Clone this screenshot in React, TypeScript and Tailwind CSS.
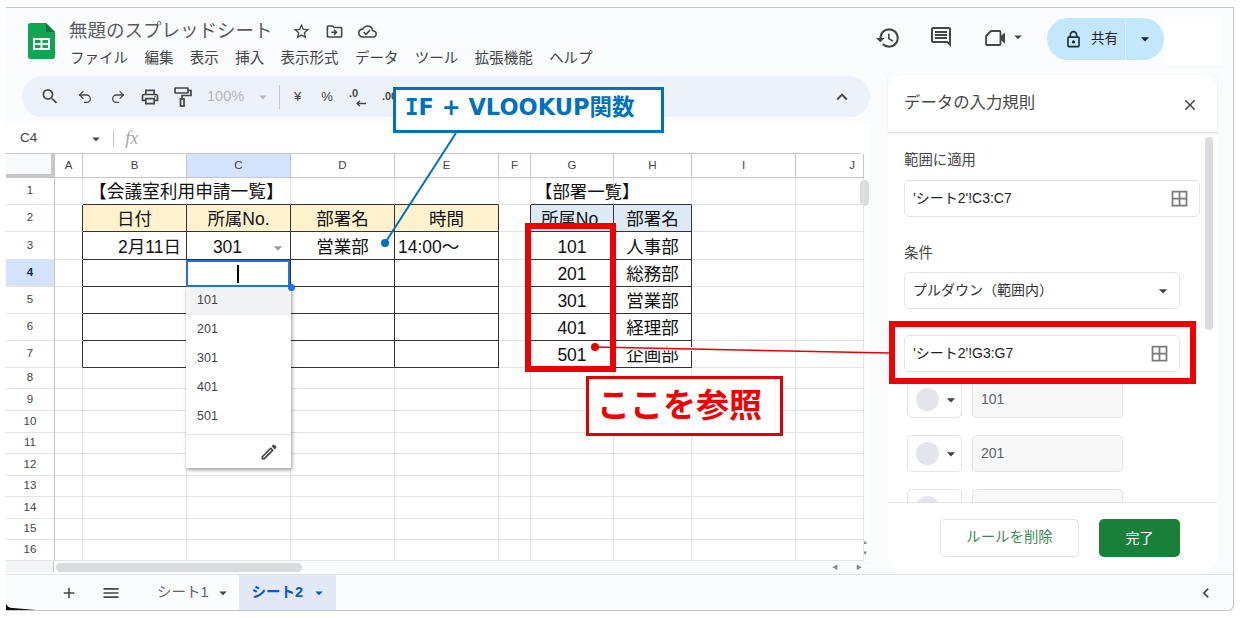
import React from "react";
import clsx from "clsx";
import { Redo2, Undo2 } from "lucide-react";
import {
  MdAdd,
  MdArrowDropDown,
  MdChevronLeft,
  MdClose,
  MdExpandLess,
  MdHistory,
  MdMenu,
  MdMoreVert,
  MdOutlineBorderAll,
  MdOutlineCloudDone,
  MdOutlineComment,
  MdOutlineDriveFileMove,
  MdOutlineEdit,
  MdOutlineLock,
  MdOutlinePrint,
  MdOutlineSearch,
  MdOutlineStarBorder,
} from "react-icons/md";

const cols = ["A", "B", "C", "D", "E", "F", "G", "H", "I", "J"];
const heights = [27, 27, 28, 27, 27, 27, 27, 21, 22, 22, 21, 22, 21, 22, 21, 21];
const menus = ["ファイル", "編集", "表示", "挿入", "表示形式", "データ", "ツール", "拡張機能", "ヘルプ"];

// row -> column -> text
const cells: Record<number, Record<string, string>> = {
  2: { B: "日付", C: "所属No.", D: "部署名", E: "時間", G: "所属No.", H: "部署名" },
  3: { B: "2月11日", C: "301", D: "営業部", E: "14:00～", G: "101", H: "人事部" },
  4: { G: "201", H: "総務部" },
  5: { G: "301", H: "営業部" },
  6: { G: "401", H: "経理部" },
  7: { G: "501", H: "企画部" },
};

const inTable = (col: string, row: number) =>
  row >= 2 && row <= 7 && ["B", "C", "D", "E", "G", "H"].includes(col);

function Cell({ col, row }: { col: string; row: number }) {
  const blackRight = inTable(col, row) || ((col === "A" || col === "F") && row >= 2 && row <= 7);
  const blackBottom = ["B", "C", "D", "E", "G", "H"].includes(col) && row >= 1 && row <= 7;
  const text = cells[row]?.[col];
  const orange = row === 2 && ["B", "C", "D", "E"].includes(col);
  const blue = row === 2 && ["G", "H"].includes(col);

  return (
    <div
      className={clsx(
        "relative flex min-w-0 items-center justify-center border-r border-b text-[17.5px] leading-none whitespace-nowrap text-[#111]",
        blackRight ? "border-r-[#333]" : "border-r-[#e2e3e3]",
        blackBottom ? "border-b-[#333]" : "border-b-[#e2e3e3]",
        text && "pt-[4px]",
        orange && "bg-[#fff2cc]",
        blue && "bg-[#deeaf6]",
        row === 3 && col === "B" && "justify-end pr-[5px]",
        row === 3 && col === "E" && "justify-start pl-[3px]",
        row === 3 && col === "C" && "pr-[22px]",
      )}
    >
      {text}
      {row === 3 && col === "C" && (
        <MdArrowDropDown className="absolute right-[2px] text-[20px] text-[#9a9a9a]" />
      )}
      {row === 1 && col === "B" && (
        <span className="absolute left-[6px] mt-[4px] text-[17.7px]">【会議室利用申請一覧】</span>
      )}
      {row === 1 && col === "G" && (
        <span className="absolute left-[4px] mt-[4px] text-[17.4px]">【部署一覧】</span>
      )}
    </div>
  );
}

function Grid() {
  return (
    <div className="flex h-[408px] bg-white">
      <div className="w-[854px]">
        <div className="grid h-[25px] grid-cols-[49px_28px_104px_104px_104px_104px_32px_83px_78px_104px_68px] border-t border-[#c7c7c7]">
          <div className="border-r-[4px] border-b-[4px] border-[#c7c7c7] bg-[#f8f9fa]" />
          {cols.map((col) => (
            <div
              key={col}
              className={clsx(
                "flex items-center justify-center border-r border-b border-[#c7c7c7] text-[11.5px] text-[#444]",
                col === "C" && "bg-[#d3e3fd]",
                col === "J" && "justify-end pr-[8px]",
              )}
            >
              {col}
            </div>
          ))}
        </div>
        {heights.map((height, i) => (
          <div
            key={i}
            style={{ height }}
            className="grid grid-cols-[49px_28px_104px_104px_104px_104px_32px_83px_78px_104px_68px]"
          >
            <div
              className={clsx(
                "flex items-center justify-center border-r border-b border-r-[#c7c7c7] border-b-[#e2e3e3] text-[11.5px]",
                i + 1 === 4 ? "bg-[#d3e3fd] font-bold text-[#0b2c5a]" : "text-[#444]",
              )}
            >
              {i + 1}
            </div>
            {cols.map((col) => (
              <Cell key={col} col={col} row={i + 1} />
            ))}
          </div>
        ))}
      </div>
      <div className="flex w-[10px] flex-col">
        <div className="mt-[27px] h-[26px] w-[9px] rounded-full bg-[#dadce0]" />
        <div className="mt-auto mb-[2px] flex flex-col items-center text-[6px] leading-[11px] text-[#888]">
          <span>▲</span>
          <span>▼</span>
        </div>
      </div>
    </div>
  );
}

function Toolbar() {
  return (
    <div className="ml-[16px] flex h-[41px] items-center rounded-full bg-[#edf2fa] text-[#444746]">
      <MdOutlineSearch className="ml-[18px] w-[20px] shrink-0 text-[21px]" />
      <Undo2 size={16} strokeWidth={1.9} className="ml-[17px] shrink-0" />
      <Redo2 size={16} strokeWidth={1.9} className="ml-[17px] shrink-0" />
      <MdOutlinePrint className="ml-[14px] shrink-0 text-[20px]" />
      <svg width="18" height="20" viewBox="0 0 18 20" fill="none" stroke="currentColor" strokeWidth="1.7" className="ml-[14px] shrink-0">
        <rect x="1" y="1" width="13" height="5" rx="0.5" />
        <path d="M14 3.5h3v5H8v3" />
        <rect x="6.5" y="12" width="3.5" height="7" />
      </svg>
      <span className="ml-[15px] text-[14.5px] text-[#b4b6b8]">100%</span>
      <MdArrowDropDown className="ml-[10px] text-[18px] text-[#b4b6b8]" />
      <div className="ml-[7px] h-[24px] w-px bg-[#c7c7c7]" />
      <span className="ml-[14px] text-[13px]">¥</span>
      <span className="ml-[20px] text-[13px]">%</span>
      <div className="relative ml-[16px] h-[20px] w-[18px] text-[11px] leading-[13px] font-bold">
        <span>.0</span>
        <svg width="10" height="7" viewBox="0 0 10 7" className="absolute top-[13px] left-[7px]" fill="none" stroke="currentColor" strokeWidth="1.3">
          <path d="M10 3.5H1M4 .8 1 3.500 4 6.200" />
        </svg>
      </div>
      <span className="ml-[15px] text-[11px] font-bold">.00</span>
      <MdMoreVert className="mr-[178px] ml-auto text-[20px]" />
      <MdExpandLess className="mr-[17px] text-[22px]" />
    </div>
  );
}

function Field({ text, wide }: { text: string; wide?: boolean }) {
  return (
    <div
      className={clsx(
        "flex h-[37px] items-center justify-between rounded-[5px] border border-[#e3e3e3] bg-white pr-[9px] pl-[8px] text-[14px] text-[#222]",
        wide ? "w-[296px]" : "w-[276px]",
      )}
    >
      <span>{text}</span>
      <MdOutlineBorderAll className="text-[21px] text-[#7b7b7b]" />
    </div>
  );
}

function ChipRow({ value }: { value: string }) {
  return (
    <div className="mb-[17px] ml-[3px] flex h-[37px] gap-[10px]">
      <div className="flex w-[55px] items-center rounded-[5px] border border-[#e3e3e3] bg-white pl-[8px]">
        <div className="h-[23px] w-[23px] rounded-full bg-[#e3e5e9]" />
        <MdArrowDropDown className="ml-[2px] text-[20px] text-[#444]" />
      </div>
      <div className="flex w-[151px] items-center rounded-[5px] border border-[#e3e3e3] bg-[#f8f8f8] pl-[8px] text-[14px] text-[#5f6368]">
        {value}
      </div>
    </div>
  );
}

function SidePanel() {
  return (
    <div className="ml-[18px] flex w-[329px] flex-col rounded-[16px] bg-white">
      <div className="flex h-[58px] shrink-0 items-center justify-between border-b border-[#e6e6e6] pr-[18px] pb-[2px] pl-[16px] shadow-[0_1px_2px_rgba(0,0,0,0.08)]">
        <span className="text-[16.4px] text-[#444746]">データの入力規則</span>
        <MdClose className="mt-[4px] text-[18px] text-[#444]" />
      </div>
      <div className="relative h-[370px] overflow-hidden border-b border-[#e3e3e3] pt-[17px] pl-[16px]">
        <div className="absolute top-[4px] right-[4px] h-[193px] w-[8px] rounded-full bg-[#dadce0]" />
        <div className="h-[20px] text-[14.4px] leading-[20px] text-[#444746]">範囲に適用</div>
        <div className="mt-[10px]">
          <Field text="'シート2'!C3:C7" wide />
        </div>
        <div className="mt-[26px] h-[20px] text-[14.4px] leading-[20px] text-[#444746]">条件</div>
        <div className="mt-[9px] flex h-[37px] w-[276px] items-center justify-between rounded-[5px] border border-[#e3e3e3] pr-[6px] pl-[8px] text-[14px] text-[#333]">
          <span>プルダウン（範囲内）</span>
          <MdArrowDropDown className="text-[20px] text-[#444]" />
        </div>
        <div className="mt-[26px]">
          <Field text="'シート2'!G3:G7" />
        </div>
        <div className="mt-[9px]">
          <ChipRow value="101" />
          <ChipRow value="201" />
          <ChipRow value="301" />
        </div>
      </div>
      <div className="flex h-[69px] items-start justify-end gap-[20px] pt-[16px] pr-[37px]">
        <button className="h-[38px] w-[139px] rounded-[5px] border border-[#e3e3e3] text-[14.4px] text-[#3c8a5a]">
          ルールを削除
        </button>
        <button className="h-[38px] w-[81px] rounded-[5px] bg-[#188038] text-[14px] text-white">完了</button>
      </div>
    </div>
  );
}

export default function App() {
  return (
    <div className="relative h-[618px] w-[1241px] overflow-hidden bg-white font-['Liberation_Sans','Noto_Sans_CJK_JP',sans-serif]">
      <div className="mt-[7px] ml-[6px] flex h-[604px] w-[1228px] flex-col rounded-br-[6px] border-t border-r border-b border-[#c4c4c4] bg-[#f9fbfd]">
        {/* Title bar */}
        <header className="flex h-[67px] shrink-0 text-[#444746]">
          <svg width="27" height="36" viewBox="0 0 27 36" className="mt-[15px] ml-[22px] shrink-0">
            <path d="M2.5 0H18l9 9v24.5a2.5 2.5 0 0 1-2.5 2.5h-22A2.5 2.5 0 0 1 0 33.5v-31A2.5 2.5 0 0 1 2.5 0z" fill="#0fa552" />
            <path d="M18 0l9 9h-9z" fill="#0a7a43" />
            <path d="M6 16h15v10H6z" fill="none" stroke="#fff" strokeWidth="2" />
            <path d="M6 21h15M13.5 16v10" stroke="#fff" strokeWidth="2" />
          </svg>
          <div className="ml-[14px] shrink-0">
            <div className="mt-[10px] flex h-[26px] items-center">
              <span className="text-[18.5px] leading-none text-[#5a5c5e]">無題のスプレッドシート</span>
              <MdOutlineStarBorder className="ml-[19px] text-[19px]" />
              <MdOutlineDriveFileMove className="ml-[14px] text-[19px]" />
              <MdOutlineCloudDone className="ml-[14px] text-[19px]" />
            </div>
            <nav className="mt-[2px] flex gap-[16.4px] pl-px text-[14.5px] leading-[24px] text-[#444]">
              {menus.map((m) => (
                <span key={m}>{m}</span>
              ))}
            </nav>
          </div>
          <div className="ml-auto flex shrink-0 items-start pt-[10px]">
            <MdHistory className="mt-[7px] text-[26px]" />
            <MdOutlineComment className="mt-[7px] ml-[28px] text-[24px]" />
            <svg width="24" height="24" viewBox="0 0 24 24" fill="none" className="mt-[8px] ml-[30px] text-[#444746]">
              <path d="M8 5h8.5a1 1 0 0 1 1 1v12a1 1 0 0 1-1 1H4a1 1 0 0 1-1-1v-8z" stroke="currentColor" strokeWidth="1.8" strokeLinejoin="round" />
              <path d="M17 10.500 22 6.500v11l-5-4z" fill="currentColor" />
            </svg>
            <MdArrowDropDown className="mt-[10px] ml-[2px] text-[18px]" />
            <div className="ml-[20px] flex h-[42px] w-[117px] items-center rounded-full bg-[#c2e7ff]">
              <MdOutlineLock className="ml-[17px] text-[19px] text-[#1b2b3a]" />
              <span className="ml-[8px] text-[13.5px] text-[#222]">共有</span>
              <div className="ml-[7px] h-full w-px bg-[#e6f4ff]" />
              <MdArrowDropDown className="ml-[9px] text-[20px] text-[#222]" />
            </div>
            <div className="-mt-[1px] mr-[11px] h-[48px] w-[58px] bg-white" />
          </div>
        </header>

        {/* Body */}
        <div className="flex h-[499px] shrink-0">
          <div className="w-[864px] shrink-0">
            <div className="h-[1px]" />
            <Toolbar />
            <div className="mt-[7px] flex h-[29px] items-center bg-white text-[#444]">
              <span className="ml-[14px] text-[13.5px]">C4</span>
              <MdArrowDropDown className="ml-[50px] text-[18px]" />
              <div className="ml-[8px] h-[17px] w-px bg-[#c7c7c7]" />
              <span className="ml-[11px] font-['Liberation_Serif',serif] text-[18px] text-[#a8a8a8] italic">fx</span>
            </div>
            <Grid />
            <div className="flex h-[12px] items-start">
              <div className="h-[11px] w-[48px] border-r border-[#c7c7c7] bg-[#f3f4f5]" />
              <div className="mt-[2px] ml-[2px] h-[9px] w-[246px] rounded-full bg-[#d9dadd]" />
              <div className="mt-[2px] ml-[530px] flex w-[30px] justify-between text-[6px] leading-[9px] text-[#888]">
                <span>◀</span>
                <span>▶</span>
              </div>
            </div>
          </div>
          <div>
            <SidePanel />
          </div>
        </div>

        {/* Sheet tabs */}
        <footer className="flex h-[36px] shrink-0 items-center border-t border-[#e3e3e3] text-[#444746]">
          <MdAdd className="ml-[54px] text-[18px]" />
          <MdMenu className="ml-[23px] text-[20px]" />
          <span className="ml-[36px] text-[14.5px] text-[#5f6368]">シート1</span>
          <MdArrowDropDown className="ml-[5px] text-[18px]" />
          <div className="ml-[7px] flex h-full w-[97px] items-center bg-[#e1e9f7] pl-[13px] text-[#0b57d0]">
            <span className="text-[14.5px] font-bold">シート2</span>
            <MdArrowDropDown className="ml-[7px] text-[18px]" />
          </div>
          <MdChevronLeft className="mr-[17px] ml-auto text-[20px]" />
        </footer>
      </div>

      {/* Validation dropdown */}
      <div className="absolute top-[286px] left-[186px] h-[182px] w-[105px] bg-white text-[12.5px] text-[#444] shadow-[1px_2px_4px_rgba(0,0,0,0.4)]">
        {["101", "201", "301", "401", "501"].map((v, i) => (
          <div key={v} className={clsx("flex h-[29px] items-center pl-[11px]", i === 0 && "bg-[#f1f3f4]")}>
            {v}
          </div>
        ))}
        <div className="mt-[3px] flex h-[32px] items-center justify-end border-t border-[#e3e3e3] pt-[2px] pr-[12px]">
          <MdOutlineEdit className="text-[20px] text-[#444]" />
        </div>
      </div>

      {/* Active cell */}
      <div className="absolute top-[260px] left-[186px] flex h-[27px] w-[104px] items-center justify-center border-2 border-[#1a73e8] bg-white">
        <div className="h-[18px] w-[2px] bg-black" />
      </div>
      <div className="absolute top-[284px] left-[288px] h-[7px] w-[7px] rounded-full bg-[#1a73e8]" />

      {/* Annotations */}
      <svg className="pointer-events-none absolute top-0 left-0" width="1241" height="618">
        <line x1="456" y1="133" x2="385" y2="243" stroke="#0070c0" strokeWidth="2" />
        <circle cx="385" cy="243" r="4" fill="#0070c0" />
        <line x1="595" y1="347" x2="890" y2="353" stroke="#fff" strokeWidth="4" />
        <line x1="595" y1="347" x2="890" y2="353" stroke="#e60000" strokeWidth="1.5" />
        <circle cx="595" cy="347" r="4" fill="#e60000" />
        <path d="M6 603Q7 608 13 608L36 610H6z" fill="#111" />
      </svg>
      <div className="absolute top-[87px] left-[393px] flex h-[46px] w-[271px] items-center border-[3px] border-[#0070c0] bg-white pb-[4px] pl-[9px] font-['DejaVu_Sans','Noto_Sans_CJK_JP',sans-serif] text-[22.5px] font-bold whitespace-pre text-[#0070c0]">
        <span className="font-['DejaVu_Sans_Mono',monospace]">I</span>F + VLOOKUP関数
      </div>
      <div className="absolute top-[223px] left-[525px] h-[149px] w-[91px] border-[6px] border-[#f00000]" />
      <div className="absolute top-[321px] left-[889px] h-[63px] w-[307px] border-[6px] border-[#f00000]" />
      <div className="absolute top-[376px] left-[586px] flex h-[60px] w-[197px] items-center border-[3px] border-[#e00000] bg-white pl-[8px] text-[33px] font-bold text-[#f00000]">
        ここを参照
      </div>
    </div>
  );
}
